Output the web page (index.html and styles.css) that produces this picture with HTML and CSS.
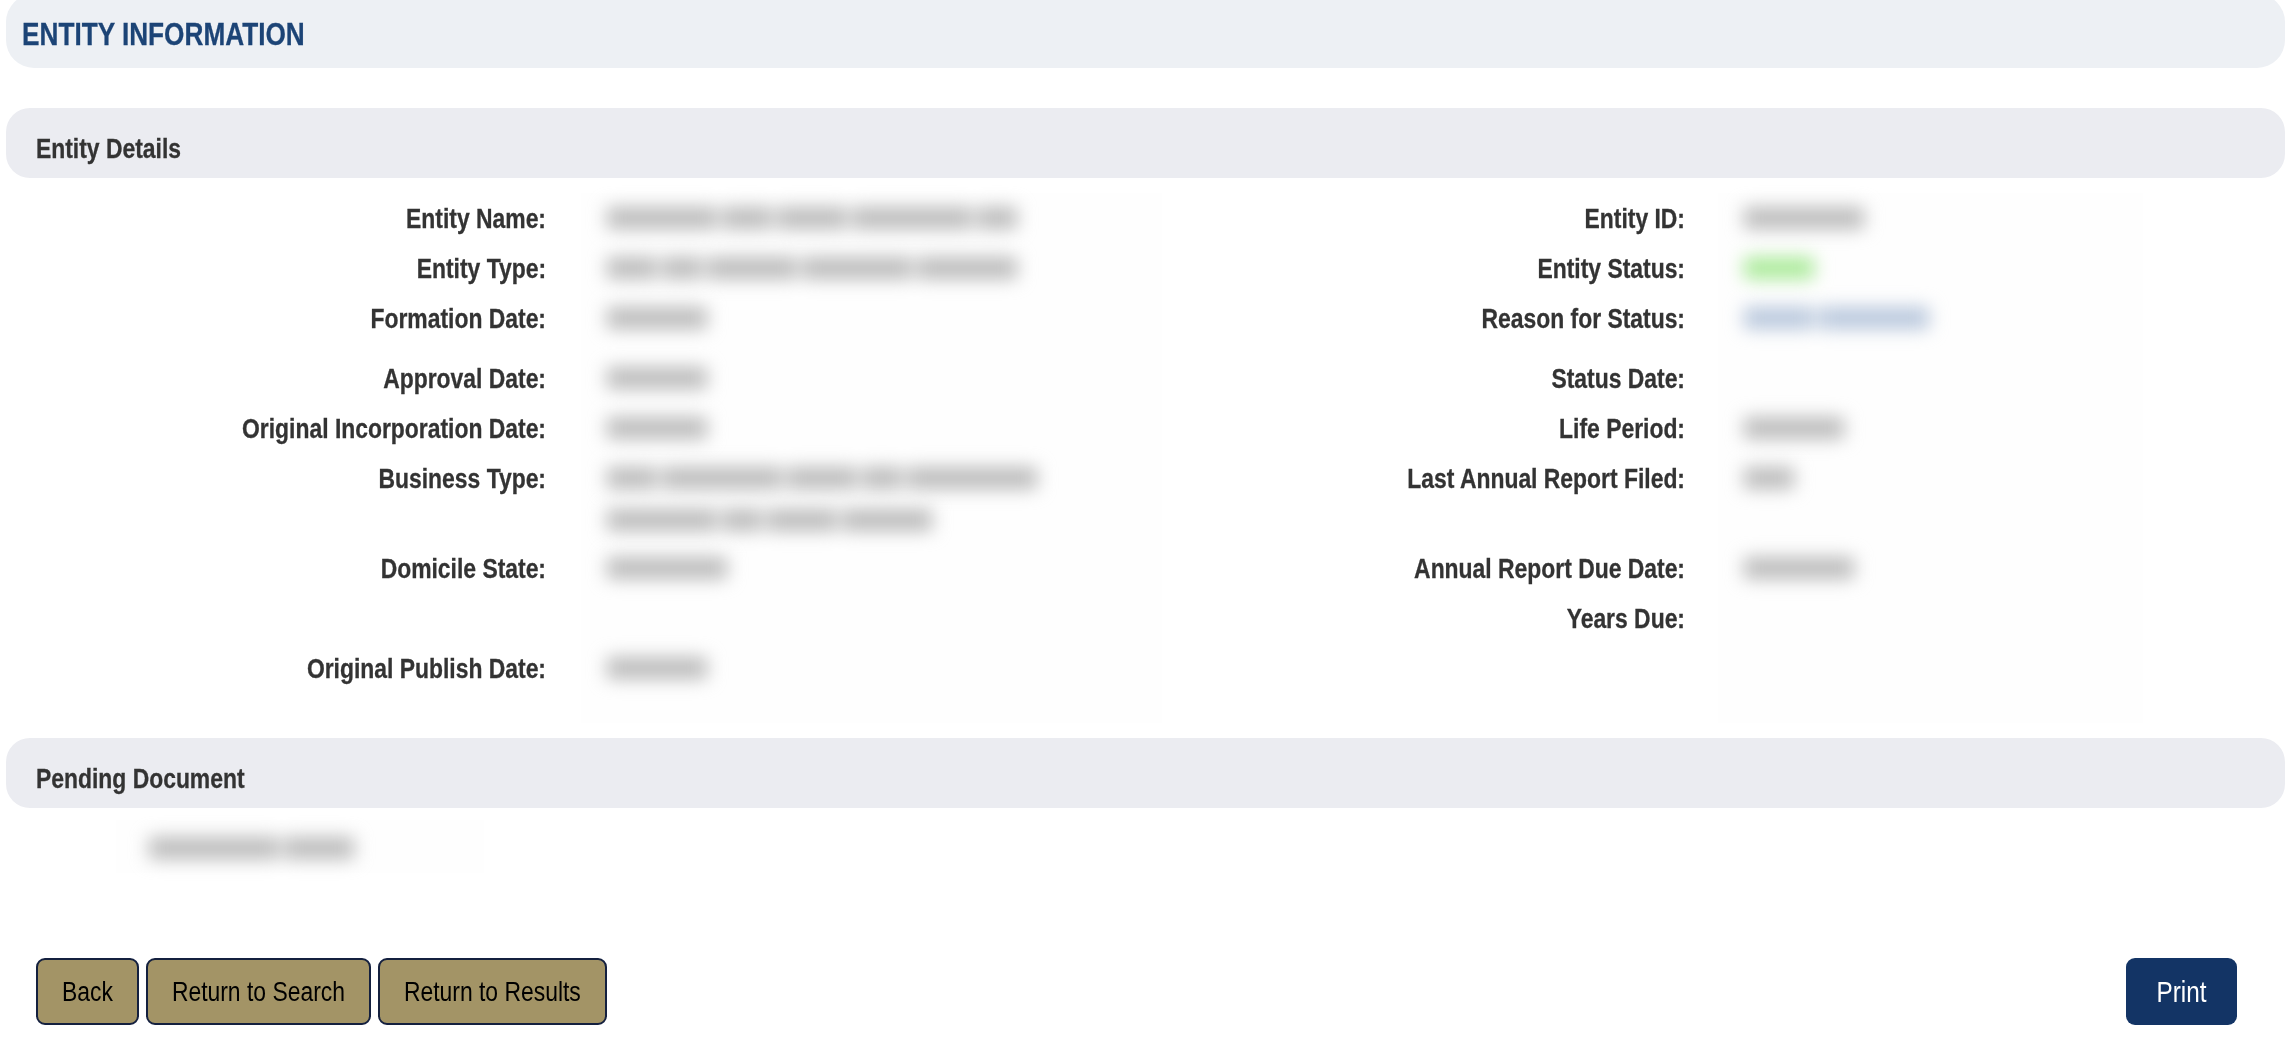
FILE: index.html
```html
<!DOCTYPE html>
<html>
  <head>
    <title>Entity Information</title>
    <meta charset="utf-8" />
    <link rel="stylesheet" href="styles.css">
  </head>

  <body>
    <div class="page_title"><span>ENTITY INFORMATION</span></div>

    <div class="section_title"><span>Entity Details</span></div>
    <div class="details">
      <div class="label">Entity Name:</div>
      <div class="value"><div class="line"><i class="w110"></i><i class="w50"></i><i class="w70"></i><i class="w120"></i><i class="w30"></i></div></div>
      <div class="label right">Entity ID:</div>
      <div class="value right"><div class="line"><i class="w120"></i></div></div>

      <div class="label">Entity Type:</div>
      <div class="value"><div class="line"><i class="w50"></i><i class="w30"></i><i class="w90"></i><i class="w110"></i><i class="w100"></i></div></div>
      <div class="label right">Entity Status:</div>
      <div class="value right"><div class="line green"><i class="w70"></i></div></div>

      <div class="label tall">Formation Date:</div>
      <div class="value"><div class="line"><i class="w100"></i></div></div>
      <div class="label right">Reason for Status:</div>
      <div class="value right"><div class="line blue"><i class="w70"></i><i class="w110"></i></div></div>

      <div class="label">Approval Date:</div>
      <div class="value"><div class="line"><i class="w100"></i></div></div>
      <div class="label right">Status Date:</div>
      <div class="value right"></div>

      <div class="label">Original Incorporation Date:</div>
      <div class="value"><div class="line"><i class="w100"></i></div></div>
      <div class="label right">Life Period:</div>
      <div class="value right"><div class="line"><i class="w100"></i></div></div>

      <div class="label double">Business Type:</div>
      <div class="value">
        <div class="line"><i class="w50"></i><i class="w120"></i><i class="w70"></i><i class="w30"></i><i class="w130"></i></div>
        <div class="line second"><i class="w110"></i><i class="w30"></i><i class="w70"></i><i class="w90"></i></div>
      </div>
      <div class="label right">Last Annual Report Filed:</div>
      <div class="value right"><div class="line"><i class="w50"></i></div></div>

      <div class="label">Domicile State:</div>
      <div class="value"><div class="line"><i class="w120"></i></div></div>
      <div class="label right">Annual Report Due Date:</div>
      <div class="value right"><div class="line"><i class="w110"></i></div></div>

      <div class="label"></div>
      <div class="value"></div>
      <div class="label right">Years Due:</div>
      <div class="value right"></div>

      <div class="label last">Original Publish Date:</div>
      <div class="value"><div class="line"><i class="w100"></i></div></div>
      <div class="label right"></div>
      <div class="value right"></div>
    </div>

    <div class="section_title"><span>Pending Document</span></div>
    <div class="pending">
      <div class="line"><i class="w130"></i><i class="w70"></i></div>
    </div>

    <div class="buttons">
      <div class="button_group">
        <a class="button" href="#"><span>Back</span></a>
        <a class="button" href="#"><span>Return to Search</span></a>
        <a class="button" href="#"><span>Return to Results</span></a>
      </div>
      <a class="print_button" href="#"><span>Print</span></a>
    </div>
  </body>
</html>
```

FILE: styles.css
```css
* {
  margin: 0;
  padding: 0;
  box-sizing: border-box;
}

body {
  background-color: white;
  color: #333333;
  font-family: "Liberation Sans", Arial, sans-serif;
  font-size: 22.9px;
  height: 1046px;
  overflow: hidden;
}

/* the text in the page is taller than it is wide */
.page_title span,
.section_title span,
.label,
.button span,
.print_button span {
  display: block;
  transform: scaleY(1.2);
}

.page_title span,
.section_title span,
.label {
  -webkit-text-stroke: 0.25px currentColor;
}

.page_title {
  background-color: #edf0f4;
  color: #1c4476;
  font-size: 26.2px;
  font-weight: bold;
  height: 74px;
  margin: -6px 9px 40px 6px;
  padding: 21px 0 0 16px;
  line-height: 38px;
  border-radius: 28px;
}

.section_title {
  background-color: #ebecf1;
  font-weight: bold;
  height: 70px;
  margin: 0 9px 0 6px;
  padding-left: 30px;
  line-height: 80px;
  border-radius: 24px;
}

.details {
  display: grid;
  grid-template-columns: 581px 581px 556px 425px;
  margin: 15px 0;
}

.label {
  font-weight: bold;
  text-align: right;
  line-height: 50px;
  height: 50px;
  padding-right: 35px;
}

.label.right {
  padding-right: 33px;
}

.label.tall {
  margin-bottom: 10px;
}

.label.double {
  margin-bottom: 40px;
}

.label.last {
  margin-bottom: 30px;
}

.value {
  background-color: #fefefe;
  padding: 14px 0 0 26px;
}

.line {
  display: flex;
  gap: 5px;
  height: 22px;
  filter: blur(9px);
}

.line.second {
  margin-top: 20px;
}

.line i {
  display: block;
  height: 22px;
  background-color: #bbbbbb;
}

.line.green i {
  background-color: #aaea99;
}

.line.blue i {
  background-color: #b8c7dc;
}

.w30 {
  width: 40px;
}

.w50 {
  width: 50px;
}

.w70 {
  width: 70px;
}

.w90 {
  width: 90px;
}

.w100 {
  width: 100px;
}

.w110 {
  width: 110px;
}

.w120 {
  width: 120px;
}

.w130 {
  width: 130px;
}

.pending {
  background-color: #fefefe;
  width: 368px;
  height: 53px;
  margin: 12px 0 0 116px;
  padding: 17px 0 0 33px;
}

.buttons {
  display: flex;
  justify-content: space-between;
  margin-top: 85px;
  padding: 0 57px 0 36px;
}

.button_group {
  display: flex;
  gap: 7px;
}

.button {
  display: block;
  background-color: #a39466;
  color: black;
  height: 67px;
  line-height: 63px;
  padding: 0 24px;
  border: 2px solid #14203f;
  border-radius: 9px;
  text-decoration: none;
}

.print_button {
  display: block;
  background-color: #133465;
  color: white;
  font-size: 24.3px;
  height: 67px;
  width: 111px;
  line-height: 67px;
  text-align: center;
  border-radius: 9px;
  text-decoration: none;
}
```
